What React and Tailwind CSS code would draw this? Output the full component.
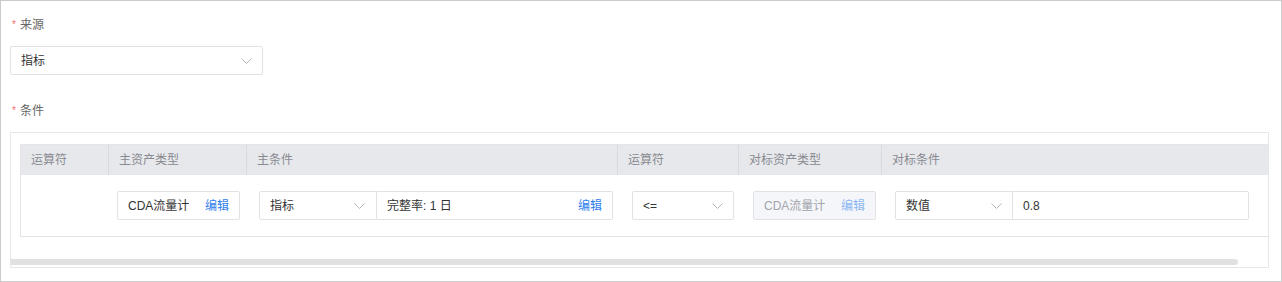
import React from 'react';

const font = { fontFamily: '"Liberation Sans", "Noto Sans CJK SC", sans-serif' };

function Chevron({ className = '' }) {
  return (
    <svg className={className} width="11" height="6" viewBox="0 0 11 6" fill="none">
      <path d="M0.5 0.5L5.5 5.5L10.5 0.5" stroke="#b4b6bc" strokeWidth="1" />
    </svg>
  );
}

function Label({ children }) {
  return (
    <div className="flex items-center h-[16px] text-[12px] text-[#666]">
      <span className="ml-[2px] mr-[4px] text-[#f56c6c] text-[10px] leading-none">*</span>
      <span>{children}</span>
    </div>
  );
}

const columns = [
  { title: '运算符', width: 'w-[88px]' },
  { title: '主资产类型', width: 'w-[138px]' },
  { title: '主条件', width: 'w-[371px]' },
  { title: '运算符', width: 'w-[121px]' },
  { title: '对标资产类型', width: 'w-[143px]' },
  { title: '对标条件', width: 'w-[410px]' },
];

export default function App() {
  return (
    <div style={font} className="w-[1282px] h-[282px] border border-[#cbcbcb] bg-white pl-[9px] pr-[12px] pt-[16px] overflow-hidden">
      <Label>来源</Label>

      {/* Source select */}
      <div className="mt-[13px] w-[253px] h-[29px] border border-[#e1e2e7] rounded-[2px] flex items-center justify-between pl-[10px] pr-[10px] text-[12px] text-[#333]">
        <span>指标</span>
        <Chevron />
      </div>

      <div className="mt-[28px]">
        <Label>条件</Label>
      </div>

      {/* Conditions table, horizontally scrollable */}
      <div className="mt-[13px] w-[1259px] h-[136px] border border-[#e6e7eb] overflow-hidden pl-[9px] pt-[11px]">
        <div className="w-[1271px] border border-[#e3e4e8] border-r-0">
          <div className="flex h-[30px] bg-[#e7e8ec] text-[12px] text-[#888a90]">
            {columns.map((c, i) => (
              <div
                key={i}
                className={`${c.width} shrink-0 flex items-center pl-[10px] ${i < columns.length - 1 ? 'border-r border-[#d9dadf]' : ''}`}
              >
                {c.title}
              </div>
            ))}
          </div>

          <div className="flex h-[61px] items-center text-[12px] text-[#333]">
            <div className="w-[88px] shrink-0" />

            <div className="w-[138px] shrink-0 pl-[8px]">
              <div className="w-[123px] h-[29px] border border-[#e1e2e7] rounded-[2px] flex items-center justify-between px-[10px]">
                <span>CDA流量计</span>
                <span className="text-[#2f80ed]">编辑</span>
              </div>
            </div>

            <div className="w-[371px] shrink-0 pl-[12px] flex">
              <div className="w-[118px] h-[29px] border border-[#e1e2e7] rounded-l-[2px] flex items-center justify-between pl-[10px] pr-[11px]">
                <span>指标</span>
                <Chevron />
              </div>
              <div className="w-[236px] h-[29px] border border-l-0 border-[#e1e2e7] rounded-r-[2px] flex items-center justify-between px-[10px]">
                <span>完整率: 1 日</span>
                <span className="text-[#2f80ed]">编辑</span>
              </div>
            </div>

            <div className="w-[121px] shrink-0 pl-[14px]">
              <div className="w-[102px] h-[29px] border border-[#e1e2e7] rounded-[2px] flex items-center justify-between pl-[10px] pr-[10px]">
                <span>&lt;=</span>
                <Chevron />
              </div>
            </div>

            <div className="w-[143px] shrink-0 pl-[14px]">
              <div className="w-[123px] h-[29px] border border-[#e1e2e7] bg-[#f5f6fa] rounded-[2px] flex items-center justify-between px-[10px]">
                <span className="text-[#a3a5ab]">CDA流量计</span>
                <span className="text-[#8db6f2]">编辑</span>
              </div>
            </div>

            <div className="w-[410px] shrink-0 pl-[13px] flex">
              <div className="w-[118px] h-[29px] border border-[#e1e2e7] rounded-l-[2px] flex items-center justify-between pl-[10px] pr-[10px]">
                <span>数值</span>
                <Chevron />
              </div>
              <div className="w-[236px] h-[29px] border border-l-0 border-[#e1e2e7] rounded-r-[2px] flex items-center px-[10px]">
                <span>0.8</span>
              </div>
            </div>
          </div>
        </div>

        {/* horizontal scrollbar */}
        <div className="mt-[22px] -ml-[9px] w-[1227px] h-[6px] rounded-r-full bg-[#e1e1e1]" />
      </div>
    </div>
  );
}
